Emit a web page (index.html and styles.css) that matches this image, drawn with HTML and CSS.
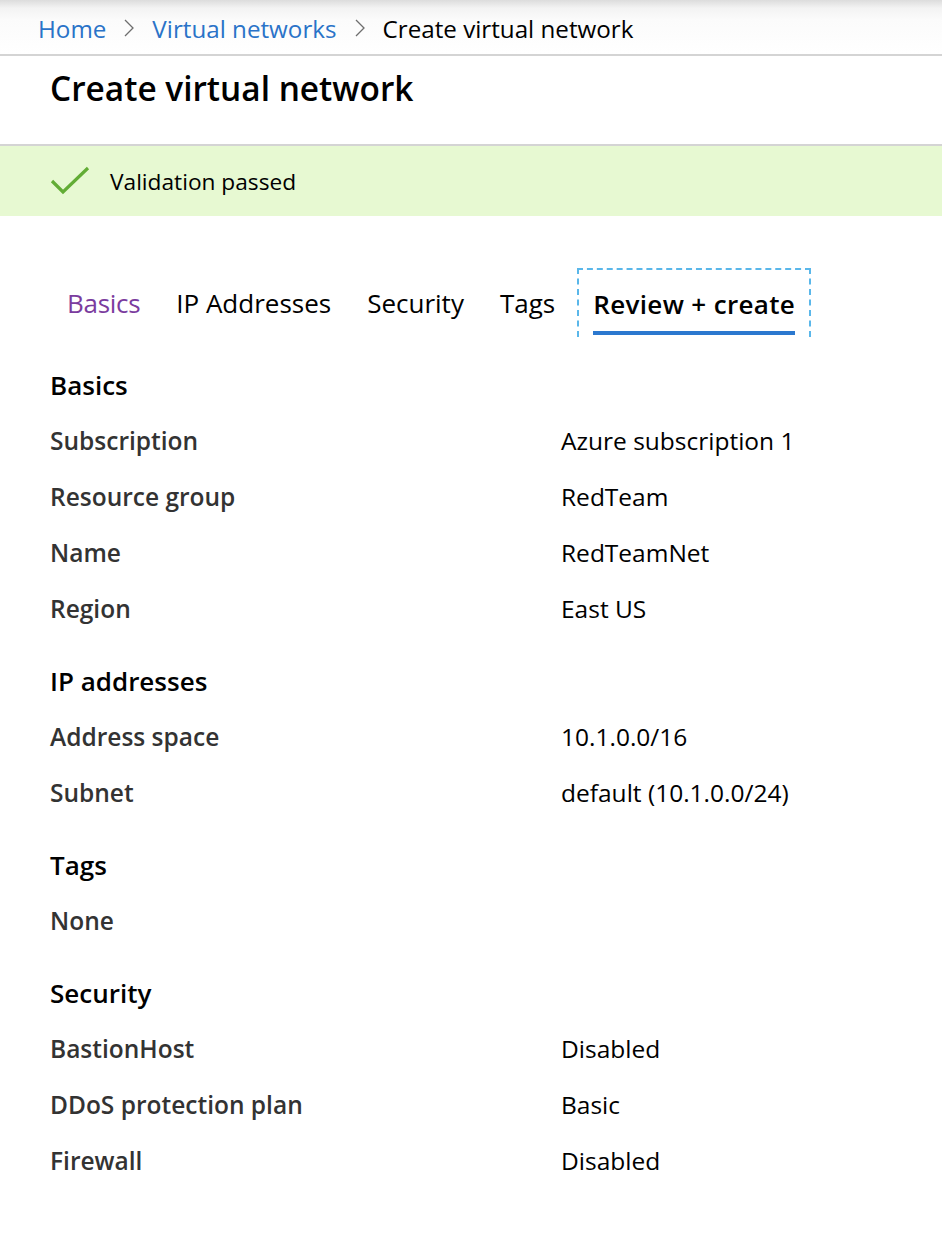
FILE: index.html
```html
<!DOCTYPE html>
<html lang="en">
<head>
<meta charset="utf-8">
<title>Create virtual network</title>
<link rel="stylesheet" href="styles.css">
</head>
<body>
<nav class="breadcrumb">
  <a class="crumb-link" href="#">Home</a>
  <svg class="chev" viewBox="0 0 12 20" width="12" height="20"><path d="M2 2 L10 10 L2 18" fill="none" stroke="#6e6e6e" stroke-width="1.3"/></svg>
  <a class="crumb-link" href="#">Virtual networks</a>
  <svg class="chev" viewBox="0 0 12 20" width="12" height="20"><path d="M2 2 L10 10 L2 18" fill="none" stroke="#6e6e6e" stroke-width="1.3"/></svg>
  <span class="crumb-current">Create virtual network</span>
</nav>
<header class="title-bar">
  <h1 class="title">Create virtual network</h1>
</header>
<div class="banner">
  <svg class="check" viewBox="0 0 40 30" width="40" height="30"><path d="M2 15 L13 26 L38 2" fill="none" stroke="#62ad35" stroke-width="3.2"/></svg>
  <span class="banner-text">Validation passed</span>
</div>
<div class="tabs">
  <span class="tab tab-visited">Basics</span>
  <span class="tab">IP Addresses</span>
  <span class="tab">Security</span>
  <span class="tab">Tags</span>
  <span class="tab tab-active"><span class="tab-label">Review + create</span></span>
</div>
<main class="summary">
  <section class="group">
    <h2 class="group-title">Basics</h2>
    <div class="row"><span class="label">Subscription</span><span class="value">Azure subscription 1</span></div>
    <div class="row"><span class="label">Resource group</span><span class="value">RedTeam</span></div>
    <div class="row"><span class="label">Name</span><span class="value">RedTeamNet</span></div>
    <div class="row"><span class="label">Region</span><span class="value">East US</span></div>
  </section>
  <section class="group">
    <h2 class="group-title">IP addresses</h2>
    <div class="row"><span class="label">Address space</span><span class="value">10.1.0.0/16</span></div>
    <div class="row"><span class="label">Subnet</span><span class="value">default (10.1.0.0/24)</span></div>
  </section>
  <section class="group">
    <h2 class="group-title">Tags</h2>
    <div class="row"><span class="label">None</span></div>
  </section>
  <section class="group">
    <h2 class="group-title">Security</h2>
    <div class="row"><span class="label">BastionHost</span><span class="value">Disabled</span></div>
    <div class="row"><span class="label">DDoS protection plan</span><span class="value">Basic</span></div>
    <div class="row"><span class="label">Firewall</span><span class="value">Disabled</span></div>
  </section>
</main>
</body>
</html>
```
FILE: styles.css
```css
html, body {
  margin: 0;
  padding: 0;
  background: #ffffff;
}
body {
  font-family: "Open Sans", "Noto Sans", "Liberation Sans", sans-serif;
  color: #000000;
}
.breadcrumb {
  height: 56px;
  box-sizing: border-box;
  display: flex;
  align-items: center;
  gap: 17px;
  padding: 2px 0 0 38px;
  background: linear-gradient(to bottom, #dcdcdc 0px, #f3f3f3 8px, #fbfbfb 20px, #ffffff 54px);
  border-bottom: 2px solid #d4d4d4;
  font-size: 24.2px;
}
.crumb-link {
  color: #2a73c8;
  text-decoration: none;
}
.crumb-current {
  color: #000000;
}
.chev {
  display: block;
}
.title-bar {
  height: 90px;
  box-sizing: border-box;
  border-bottom: 2px solid #d4d4d4;
  padding: 11px 0 0 50px;
}
.title {
  margin: 0;
  font-size: 33.4px;
  font-weight: 600;
  line-height: 42px;
  letter-spacing: 0;
}
.banner {
  height: 70px;
  background: #e7f9d2;
  display: flex;
  align-items: center;
  padding-left: 50px;
  gap: 20px;
}
.check {
  display: block;
}
.banner-text {
  font-size: 22.7px;
}
.tabs {
  display: flex;
  gap: 4px;
  margin: 52px 0 0 51px;
  font-size: 26px;
}
.tab {
  height: 69px;
  box-sizing: border-box;
  padding: 0 16px;
  display: flex;
  align-items: center;
}
.tab-visited {
  color: #7b3c9e;
  letter-spacing: -0.3px;
}
.tab-active {
  font-weight: 600;
  border: 2px dashed #5ab7ea;
  border-bottom: none;
  margin-left: 2px;
  padding: 0 14px;
  align-items: stretch;
  letter-spacing: 0.35px;
}
.tab-active .tab-label {
  display: flex;
  align-items: center;
  border-bottom: 4px solid #2b78cf;
  margin-bottom: 2px;
  padding-top: 6px;
}
.summary {
  padding: 20px 0 40px 50px;
  display: flex;
  flex-direction: column;
  gap: 16px;
}
.group-title {
  margin: 0;
  font-size: 26px;
  font-weight: 600;
  line-height: 56px;
  color: #000000;
}
.row {
  display: grid;
  grid-template-columns: 511px 1fr;
  line-height: 56px;
  font-size: 24.5px;
}
.label {
  font-weight: 600;
  color: #333333;
}
.value {
  color: #000000;
}
```
